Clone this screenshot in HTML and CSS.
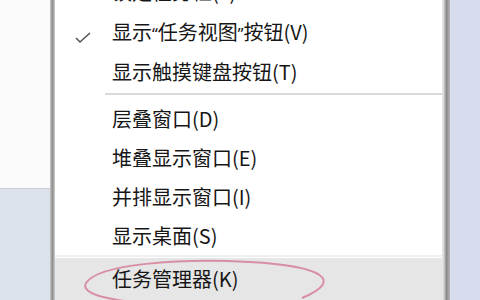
FILE: index.html
```html
<!DOCTYPE html>
<html>
  <head>
    <meta charset="utf-8">
    <title>任务栏菜单</title>
    <link rel="stylesheet" href="styles.css">
  </head>
  <body>
    <div class="screen">
      <div class="side-left">
        <div class="side-top"></div>
        <div class="side-bottom"></div>
      </div>
      <div class="edge-left"></div>
      <div class="menu">
        <div class="item first"><span class="label">锁定任务栏(L)</span></div>
        <div class="item">
          <span class="check">
            <svg width="16" height="12" viewBox="0 0 16 12"><polyline points="1,6 5,10 15,1" fill="none" stroke="#555" stroke-width="1.6"/></svg>
          </span>
          <span class="label">显示<span class="q">“</span>任务视图<span class="q">”</span>按钮(V)</span>
        </div>
        <div class="item"><span class="label">显示触摸键盘按钮(T)</span></div>
        <div class="sep"></div>
        <div class="item short"><span class="label">层叠窗口(D)</span></div>
        <div class="item short"><span class="label">堆叠显示窗口(E)</span></div>
        <div class="item short"><span class="label">并排显示窗口(I)</span></div>
        <div class="item short"><span class="label">显示桌面(S)</span></div>
        <div class="sep thin"></div>
        <div class="item hot"><span class="label">任务管理器(K)</span></div>
      </div>
      <div class="edge-right"></div>
      <div class="side-right"></div>
      <svg class="circle" width="480" height="300" viewBox="0 0 480 300">
        <path d="M302 298 C345 280 322 266 250 262 C180 258 98 264 86 283 C78 297 130 305 200 305" fill="none" stroke="#d98fa3" stroke-width="2"/>
      </svg>
    </div>
  </body>
</html>
```

FILE: styles.css
```css
html, body {
  margin: 0;
  padding: 0;
}
body {
  width: 480px;
  height: 300px;
  overflow: hidden;
  font-family: "Noto Sans CJK SC", "Microsoft YaHei", sans-serif;
  color: #161616;
  background: #fff;
}
.screen {
  position: relative;
  display: flex;
  height: 300px;
}
.side-left {
  width: 50px;
  display: flex;
  flex-direction: column;
}
.side-top {
  height: 188px;
  background: #fbfbfb;
  border-bottom: 1px solid #c9ced6;
}
.side-bottom {
  flex: 1;
  background: #dce2ea;
}
.edge-left {
  width: 5px;
  background: linear-gradient(to right, #c8c8c8, #8e8e8e, #d0d0d0);
}
.menu {
  flex: 1;
  display: flex;
  flex-direction: column;
  background: #fff;
  border-right: 1px solid #e4e4e4;
}
.item {
  height: 40px;
  display: flex;
  align-items: center;
  padding-left: 57px;
  position: relative;
  font-size: 20px;
  line-height: 1;
  white-space: nowrap;
}
.item.first {
  margin-top: -28px;
}
.item.short {
  height: 39px;
}
.q {
  font-family: "Noto Sans", sans-serif;
  font-size: 16px;
}
.check {
  position: absolute;
  left: 20px;
  top: 14px;
}
.sep {
  height: 7px;
  margin-left: 50px;
  display: flex;
  align-items: flex-start;
}
.sep::after {
  content: "";
  display: block;
  flex: 1;
  height: 2px;
  margin-top: 1px;
  background: #dadada;
}
.sep.thin {
  height: 3px;
  margin-left: 0;
}
.sep.thin::after {
  margin-top: 0;
  background: #efefef;
}
.item.hot {
  background: #e6e6e6;
  height: 42px;
}
.edge-right {
  width: 7px;
  background: linear-gradient(to right, #e8e8e8, #8a8a8a, #b5b5b5);
}
.side-right {
  width: 30px;
  background: #d7dcef;
}
.circle {
  position: absolute;
  left: 0;
  top: 0;
  pointer-events: none;
}
```
